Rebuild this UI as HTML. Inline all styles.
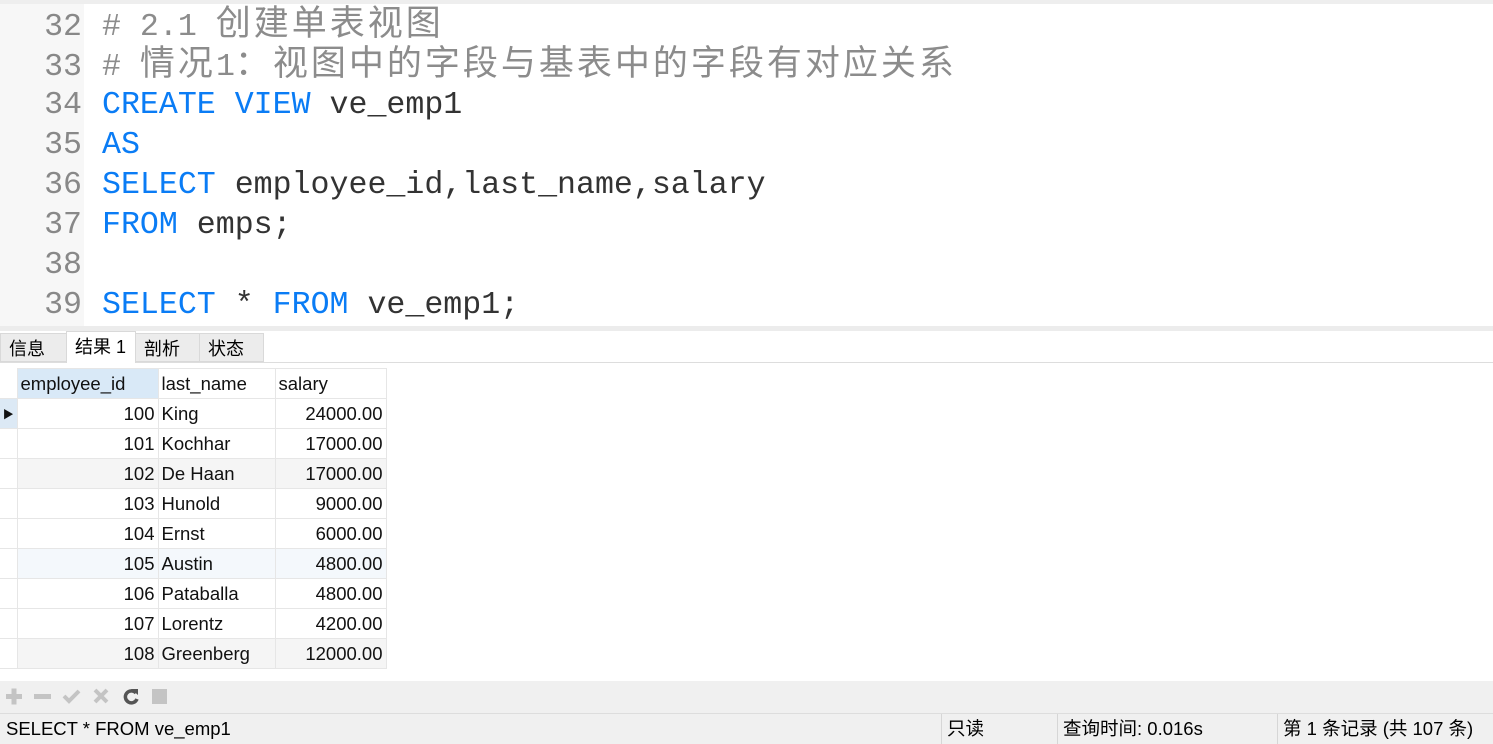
<!DOCTYPE html>
<html><head><meta charset="utf-8"><style>
body{margin:0;width:1493px;height:744px;overflow:hidden;background:#fff;position:relative;font-family:"Liberation Sans","Noto Sans CJK SC",sans-serif}
.ed{position:absolute;left:0;top:0;width:1493px;height:326px;background:#fff}
.gut{position:absolute;left:0;top:0;width:84px;height:326px;background:#f7f7f7}
.ln{position:absolute;left:0;width:1493px;height:40px;font-family:"Liberation Mono","Noto Sans CJK SC",monospace;font-size:31.6px;line-height:40px;white-space:pre;color:#333}
.ln .n{display:inline-block;width:82px;text-align:right;color:#888;margin-right:20px}
.k{color:#0a7cf5}.c{color:#8c8c8c}
.z{font-size:35px;letter-spacing:3px;line-height:40px}
.sep{position:absolute;left:0;top:326px;width:1493px;height:5px;background:#ececec}
.tabs{position:absolute;left:0;top:331px;width:1493px;height:31px;border-bottom:1px solid #ddd;background:#fff}
.tab{position:absolute;top:2px;height:29px;background:#ececec;border:1px solid #d9d9d9;font-size:18px;line-height:30px;padding-left:8px;box-sizing:border-box}
table{position:absolute;left:0;top:368px;border-collapse:collapse;font-size:18.5px}
td{height:30px;padding:0 3px;border:1px solid #e6e6e6;white-space:nowrap;box-sizing:border-box;color:#111}
td.i{width:17px;padding:0;border-left:none}
.r{text-align:right}
.tb{position:absolute;left:0;top:681px;width:1493px;height:32px;background:#f0f0f0;border-bottom:1px solid #ddd}
.st{position:absolute;left:0;top:714px;width:1493px;height:30px;background:#f0f0f0;font-size:18.5px;line-height:30px}
.st div{position:absolute;top:0;height:30px;border-left:1px solid #d6d6d6;padding-left:5px}
</style></head><body>
<div class="ed"><div class="gut"></div>
<div style="position:absolute;left:0;top:0;width:1493px;height:4px;background:#eee"></div>
<div class="ln" style="top:6px"><span class="n">32</span><span class="c"># 2.1 <span class="z">创建单表视图</span></span></div>
<div class="ln" style="top:46px"><span class="n">33</span><span class="c"># <span class="z">情况</span>1<span class="z">：视图中的字段与基表中的字段有对应关系</span></span></div>
<div class="ln" style="top:86px"><span class="n">34</span><span class="k">CREATE VIEW</span> ve_emp1</div>
<div class="ln" style="top:126px"><span class="n">35</span><span class="k">AS</span></div>
<div class="ln" style="top:166px"><span class="n">36</span><span class="k">SELECT</span> employee_id,last_name,salary</div>
<div class="ln" style="top:206px"><span class="n">37</span><span class="k">FROM</span> emps;</div>
<div class="ln" style="top:246px"><span class="n">38</span></div>
<div class="ln" style="top:286px"><span class="n">39</span><span class="k">SELECT</span> * <span class="k">FROM</span> ve_emp1;</div>
</div>
<div class="sep"></div>
<div class="tabs">
<div class="tab" style="left:0;width:67px">信息</div>
<div class="tab" style="left:66px;width:70px;top:0;height:32px;background:#fff;border-bottom:none">结果 1</div>
<div class="tab" style="left:135px;width:65px">剖析</div>
<div class="tab" style="left:199px;width:65px">状态</div>
</div>
<table>
<tr><td class="i" style="border-top:none;border-bottom:none"></td><td style="width:141px;background:#d9e9f7">employee_id</td><td style="width:117px">last_name</td><td style="width:111px">salary</td></tr>
<tr style="background:#fff"><td class="i" style="background:#dce9f5;font-size:11px;text-align:center">▶</td><td class="r">100</td><td>King</td><td class="r">24000.00</td></tr>
<tr><td class="i"></td><td class="r">101</td><td>Kochhar</td><td class="r">17000.00</td></tr>
<tr style="background:#f5f5f5"><td class="i" style="background:#fff"></td><td class="r">102</td><td>De Haan</td><td class="r">17000.00</td></tr>
<tr><td class="i"></td><td class="r">103</td><td>Hunold</td><td class="r">9000.00</td></tr>
<tr><td class="i"></td><td class="r">104</td><td>Ernst</td><td class="r">6000.00</td></tr>
<tr style="background:#f4f8fc"><td class="i" style="background:#fff"></td><td class="r">105</td><td>Austin</td><td class="r">4800.00</td></tr>
<tr><td class="i"></td><td class="r">106</td><td>Pataballa</td><td class="r">4800.00</td></tr>
<tr><td class="i"></td><td class="r">107</td><td>Lorentz</td><td class="r">4200.00</td></tr>
<tr style="background:#f5f5f5"><td class="i" style="background:#fff"></td><td class="r">108</td><td>Greenberg</td><td class="r">12000.00</td></tr>
</table>
<div class="tb">
<svg width="180" height="32" style="position:absolute;left:0;top:0">
<g fill="#c4c4c4"><rect x="6" y="13" width="16" height="5"/><rect x="11.5" y="7.5" width="5" height="16"/>
<rect x="34" y="13" width="17" height="5"/></g>
<path d="M64 15 l5 5 l10 -10" stroke="#c4c4c4" stroke-width="4" fill="none"/>
<path d="M95 9 l12 12 M107 9 l-12 12" stroke="#c4c4c4" stroke-width="4"/>
<path d="M136 12 a6 6 0 1 0 1 6" stroke="#555" stroke-width="3.5" fill="none"/><path d="M131 8 l7 0 l0 6z" fill="#555"/>
<rect x="152" y="8" width="15" height="15" fill="#c4c4c4"/>
</svg></div>
<div class="st">
<div style="left:0;border:none;padding-left:6px">SELECT * FROM ve_emp1</div>
<div style="left:941px">只读</div>
<div style="left:1057px">查询时间: 0.016s</div>
<div style="left:1277px">第 1 条记录 (共 107 条)</div>
</div>
</body></html>
